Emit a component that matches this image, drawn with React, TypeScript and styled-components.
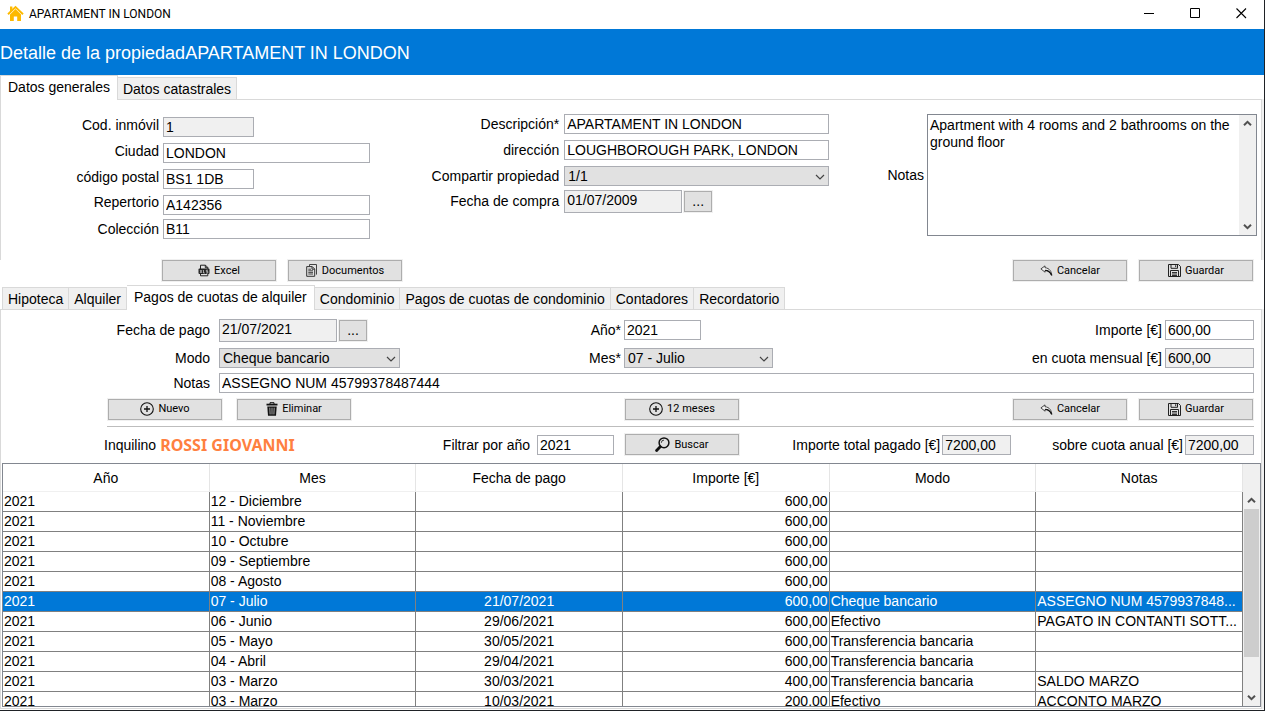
import React, { useState } from "react";
import styled, { createGlobalStyle, css } from "styled-components";

const accent = "#0078d7";
const line = "#d9d9d9";
const fieldBorder = "#abadb3";
const readOnlyBg = "#f0f0f0";

const GlobalStyle = createGlobalStyle`
  *, *::before, *::after { box-sizing: border-box; }
  body {
    margin: 0;
    background: #fff;
    color: #000;
    font-family: "Liberation Sans", Arial, sans-serif;
    font-size: 14px;
    line-height: 16px;
  }
  button, input, select, textarea { font: inherit; color: inherit; margin: 0; border-radius: 0; outline: none; }
`;

/* ---------- window ---------- */

const Window = styled.div`
  display: flex;
  flex-direction: column;
  height: 100vh;
  min-width: 1100px;
  border-right: 1px solid #1f2226;
  border-bottom: 1px solid #1f2226;
  overflow: hidden;
`;

const TitleBar = styled.header`
  flex: none;
  display: flex;
  align-items: center;
  height: 29px;
  padding: 0 0 2px 7px;
  font-family: Roboto, "Segoe UI", sans-serif;
  font-size: 12px;
`;

const WindowTitle = styled.span`
  margin-left: 5px;
  flex: 1;
`;

const WindowButton = styled.button`
  display: flex;
  align-items: center;
  justify-content: center;
  width: 46px;
  height: 27px;
  padding: 0;
  border: 0;
  background: none;
`;

const Banner = styled.h1`
  flex: none;
  display: flex;
  align-items: center;
  height: 46px;
  margin: 0;
  padding-top: 2px;
  background: ${accent};
  color: #fff;
  font-size: 18px;
  font-weight: 400;
`;

/* ---------- tabs ---------- */

const TabStrip = styled.div<{ $indent?: boolean }>`
  flex: none;
  display: flex;
  align-items: flex-end;
  height: 24px;
  padding-left: ${(p) => (p.$indent ? 2 : 0)}px;
`;

const Tab = styled.button<{ $active?: boolean }>`
  height: ${(p) => (p.$active ? 24 : 22)}px;
  padding: ${(p) => (p.$active ? "0 7px 2px" : "0 5px")};
  border: 1px solid ${line};
  border-bottom: 0;
  background: ${(p) => (p.$active ? "#fff" : "#f0f0f0")};
  line-height: 20px;
  white-space: nowrap;
  & + & { border-left: ${(p) => (p.$active ? `1px solid ${line}` : "0")}; }
  ${(p) =>
    p.$active &&
    css`
      position: relative;
      margin-bottom: -1px;
      height: 25px;
    `}
`;

const Panel = styled.section<{ $fill?: boolean }>`
  border: 1px solid ${line};
  margin-right: 2px;
  box-shadow: 2px 0 0 #f0f0f0;
  ${(p) =>
    p.$fill
      ? css`
          flex: 1;
          min-height: 0;
          display: flex;
          flex-direction: column;
          margin-bottom: 1px;
        `
      : css`
          flex: none;
          border-bottom: 0;
        `}
`;

/* ---------- fields ---------- */

const Label = styled.label<{ $raised?: boolean }>`
  text-align: right;
  white-space: nowrap;
  padding-bottom: ${(p) => (p.$raised ? 5 : 0)}px;
`;

const Input = styled.input<{ $w?: number }>`
  width: ${(p) => (p.$w ? `${p.$w}px` : "100%")};
  height: 20px;
  padding: 0 2px;
  border: 1px solid ${fieldBorder};
  background: #fff;
  &:read-only { background: ${readOnlyBg}; }
`;

const DateInput = styled(Input)`
  height: 23px;
  padding-bottom: 2px;
`;

const SelectBox = styled.span<{ $w: number }>`
  position: relative;
  display: flex;
  width: ${(p) => p.$w}px;
  svg {
    position: absolute;
    right: 4px;
    top: 7px;
    pointer-events: none;
  }
`;

const SelectInput = styled.select`
  appearance: none;
  width: 100%;
  height: 20px;
  padding: 0 3px;
  border: 1px solid ${fieldBorder};
  background: #e1e1e1;
`;

const DateRow = styled.span`
  display: flex;
  align-items: center;
  gap: 2px;
`;

const buttonFace = css`
  border: 1px solid #adadad;
  background: #e1e1e1;
  box-shadow: 0 0 0 1px #f0f0f0;
  height: 21px;
  padding: 0;
`;

const DotsButton = styled.button`
  ${buttonFace}
  width: 28px;
  line-height: 16px;
`;

const ActionButton = styled.button<{ $gap?: number }>`
  ${buttonFace}
  display: flex;
  align-items: center;
  justify-content: center;
  gap: ${(p) => p.$gap ?? 4}px;
  width: 114px;
  font-family: Roboto, Tahoma, sans-serif;
  font-size: 11px;
  svg { flex: none; }
`;

/* ---------- general data ---------- */

const General = styled.div`
  display: flex;
  justify-content: space-between;
  align-items: flex-start;
  height: 160px;
  padding-right: 4px;
`;

const CodeGrid = styled.div`
  display: grid;
  grid-template-columns: 158px 207px;
  grid-template-rows: 26px 26px 26px 25px 24px;
  column-gap: 4px;
  align-items: center;
  margin-top: 14px;
`;

const DetailGrid = styled.div`
  display: grid;
  grid-template-columns: 131px 265px;
  grid-template-rows: 26px 26px 26px 24px;
  column-gap: 5px;
  align-items: center;
  margin-top: 11px;
`;

const NotesGroup = styled.div`
  display: flex;
  align-items: center;
  gap: 3px;
  margin-top: 14px;
`;

const NotesBox = styled.div`
  display: flex;
  width: 330px;
  height: 122px;
  border: 1px solid #828790;
`;

const NotesArea = styled.textarea`
  flex: 1;
  min-width: 0;
  padding: 2px;
  border: 0;
  resize: none;
  overflow: hidden;
  line-height: 17px;
`;

/* ---------- scroll bar ---------- */

const ScrollTrack = styled.div`
  flex: none;
  display: flex;
  flex-direction: column;
  align-items: center;
  justify-content: space-between;
  width: 17px;
  background: #f0f0f0;
`;

const ScrollButton = styled.button`
  display: flex;
  align-items: center;
  justify-content: center;
  width: 17px;
  height: 17px;
  padding: 0;
  border: 0;
  background: none;
`;

const ScrollLane = styled.div`
  flex: 1;
  width: 15px;
`;

const ScrollThumb = styled.div`
  height: 82%;
  background: #cdcdcd;
`;

/* ---------- bars ---------- */

const ActionBar = styled.div`
  flex: none;
  display: flex;
  align-items: flex-start;
  gap: 12px;
  height: 25px;
  padding: 0 11px 0 162px;
`;

const Spacer = styled.span<{ $grow?: number }>`
  flex: ${(p) => p.$grow ?? 1};
`;

const Split = styled.div<{ $h: number }>`
  flex: none;
  display: grid;
  grid-template-columns: 623fr 630fr;
  align-items: center;
  height: ${(p) => p.$h}px;
  padding-right: 7px;
`;

const Half = styled.div<{ $indent?: number; $gap?: number; $end?: number }>`
  display: flex;
  align-items: center;
  gap: ${(p) => p.$gap ?? 3}px;
  padding-left: ${(p) => p.$indent ?? 0}px;
  padding-right: ${(p) => p.$end ?? 0}px;
`;

const PaymentField = styled.div`
  flex: 1;
  display: grid;
  grid-template-columns: 209px minmax(0, 1fr);
  column-gap: 9px;
  align-items: center;
`;

const PaymentForm = styled.div`
  flex: none;
  padding-top: 6px;
`;

const NotesRow = styled.div`
  display: flex;
  align-items: center;
  height: 22px;
  padding-right: 7px;
`;

const Rule = styled.hr`
  flex: none;
  width: calc(100% - 113px);
  height: 1px;
  margin: 2px 7px 0 106px;
  border: 0;
  background: #bdbdbd;
`;

const Tenant = styled.strong`
  color: #ff8040;
  font-family: "Noto Sans", Tahoma, sans-serif;
  font-size: 16px;
  line-height: 20px;
`;

/* ---------- payments table ---------- */

const TableFrame = styled.div`
  flex: 1;
  min-height: 0;
  display: flex;
  margin: 1px 0 1px 1px;
  border: 1px solid #828790;
`;

const TableView = styled.div`
  flex: 1;
  min-width: 0;
  overflow: hidden;
`;

const Table = styled.table`
  width: 100%;
  table-layout: fixed;
  border-collapse: separate;
  border-spacing: 0;
`;

const HeadCell = styled.th`
  height: 28px;
  padding: 0;
  border-right: 1px solid #e5e5e5;
  border-bottom: 1px solid #f0f0f0;
  font-weight: 400;
`;

const Row = styled.tr<{ $selected: boolean }>`
  background: ${(p) => (p.$selected ? accent : "#fff")};
  color: ${(p) => (p.$selected ? "#fff" : "#000")};
`;

const Cell = styled.td<{ $align?: "left" | "center" | "right" }>`
  height: 20px;
  padding: 0 1px 2px;
  border-right: 1px solid #808080;
  border-bottom: 1px solid #808080;
  text-align: ${(p) => p.$align ?? "left"};
  white-space: nowrap;
  overflow: hidden;
`;

const TableScroll = styled(ScrollTrack)`
  padding-top: 28px;
`;

/* ---------- icons ---------- */

const HouseIcon = () => (
  <svg width="17" height="17" viewBox="0 0 17 17" aria-hidden="true">
    <path d="M3 1.5h2.4v3L3 7z" fill="#fdb900" />
    <path d="M1 9.3 8.5 2 16 9.3" fill="none" stroke="#fdb900" strokeWidth="1.9" />
    <path d="M3 9.4 8.5 4.1 14 9.4V16h-3.8v-4.5H6.8V16H3z" fill="#fdb900" />
  </svg>
);

const ExcelIcon = () => (
  <svg width="12" height="13" viewBox="0 0 12 13" aria-hidden="true">
    <path d="M2.5 5V1.2h5L9.8 3.5V5M7.3 1.2v2.5h2.5M2.5 9.5v2.3h7.3V9.5" fill="none" stroke="#222" />
    <rect x="0.5" y="4.5" width="11" height="5.6" rx="1" fill="#222" />
    <path d="m2 6 2 3M4 6 2 9M5.5 6v3h1.3M10 6.2H8.3v1.2h1.5V9H8" fill="none" stroke="#ddd" strokeWidth="0.7" />
  </svg>
);

const DocumentsIcon = () => (
  <svg width="12" height="13" viewBox="0 0 12 13" aria-hidden="true">
    <path d="M2.5 2.5v-2h7v9.8H9" fill="none" stroke="#444" transform="translate(1 0)" />
    <path d="M.7 2.6h5.6l2.4 2.4v7.3h-8zM6 2.8v2.4h2.5" fill="none" stroke="#333" />
    <path d="M2.3 5.2H5M2.3 6.8H7M2.3 8.4H7M2.3 10H7" stroke="#333" strokeWidth="0.9" />
  </svg>
);

const UndoIcon = () => (
  <svg width="13" height="11" viewBox="0 0 13 11" aria-hidden="true">
    <path
      d="M5 .9.9 3.9l4.2 3.3V5.4c3.1 0 5 1.6 6.6 5-.1-3.7-2-7.2-6.7-7.7z"
      fill="#f4f4f4"
      stroke="#333"
      strokeWidth="0.9"
      strokeLinejoin="round"
    />
    <path d="M5.2 5.3c3.1 0 5 1.7 6.5 5" fill="none" stroke="#111" strokeWidth="1.3" />
  </svg>
);

const SaveIcon = () => (
  <svg width="13" height="13" viewBox="0 0 13 13" aria-hidden="true">
    <path d="M.5.5h10l2 2v10H.5z" fill="none" stroke="#222" />
    <path d="M3 .5v3.8h6.5V.5M7.7 1.2v2" fill="none" stroke="#222" />
    <path d="M2.5 12.5V6.5h8v6" fill="none" stroke="#222" />
    <path d="M4 8.5h5M4 10h5M4 11.5h5" stroke="#333" />
  </svg>
);

const PlusIcon = () => (
  <svg width="14" height="14" viewBox="0 0 14 14" aria-hidden="true">
    <circle cx="7" cy="7" r="6.3" fill="none" stroke="#111" strokeWidth="1.1" />
    <path d="M7 4v6M4 7h6" stroke="#111" strokeWidth="1.3" />
  </svg>
);

const TrashIcon = () => (
  <svg width="12" height="14" viewBox="0 0 12 14" aria-hidden="true">
    <path d="M4 2V.7h4V2" fill="none" stroke="#111" />
    <path d="M.5 2.6h11" stroke="#111" strokeWidth="1.8" />
    <path d="M1.3 4.4h9.4L10 13.7H2z" fill="#111" />
    <path d="M3.8 5.7l.3 6.7M6 5.7v6.7M8.2 5.7l-.3 6.7" stroke="#ccc" strokeWidth="0.8" />
  </svg>
);

const SearchIcon = () => (
  <svg width="15" height="15" viewBox="0 0 15 15" aria-hidden="true">
    <circle cx="9" cy="5.8" r="4.9" fill="none" stroke="#111" strokeWidth="1.5" />
    <path d="M6.3 5.8A2.7 2.7 0 0 1 9 3.1" fill="none" stroke="#111" strokeWidth="0.8" />
    <path d="m5.2 9.7-3.6 3.7" stroke="#111" strokeWidth="2.8" strokeLinecap="round" />
  </svg>
);

const ComboArrow = () => (
  <svg width="10" height="8" viewBox="0 0 10 8" aria-hidden="true">
    <path d="m1 2 4 4 4-4" fill="none" stroke="#444" strokeWidth="1.2" />
  </svg>
);

const ScrollArrow = ({ up }: { up?: boolean }) => (
  <svg width="9" height="7" viewBox="0 0 9 7" aria-hidden="true">
    <path d={up ? "m1 5.2 3.5-3.4L8 5.2" : "m1 1.8 3.5 3.4L8 1.8"} fill="none" stroke="#505050" strokeWidth="2" />
  </svg>
);

const MinimizeIcon = () => (
  <svg width="11" height="11" viewBox="0 0 11 11" aria-hidden="true">
    <path d="M0 5.5h10" stroke="#000" />
  </svg>
);
const MaximizeIcon = () => (
  <svg width="11" height="11" viewBox="0 0 11 11" aria-hidden="true">
    <path d="M.5.5h9v9h-9z" fill="none" stroke="#000" />
  </svg>
);
const CloseIcon = () => (
  <svg width="11" height="11" viewBox="0 0 11 11" aria-hidden="true">
    <path d="m.5.5 9.5 9.5M10 .5.5 10" stroke="#000" strokeWidth="1.1" />
  </svg>
);

/* ---------- pieces ---------- */

const Combo = ({ id, width, options }: { id: string; width: number; options: string[] }) => (
  <SelectBox $w={width}>
    <SelectInput id={id}>
      {options.map((o) => (
        <option key={o}>{o}</option>
      ))}
    </SelectInput>
    <ComboArrow />
  </SelectBox>
);

const DateField = ({ id, value }: { id: string; value: string }) => (
  <DateRow>
    <DateInput id={id} $w={118} readOnly defaultValue={value} />
    <DotsButton type="button" aria-label="Elegir fecha">...</DotsButton>
  </DateRow>
);

const CancelSave = () => (
  <>
    <ActionButton type="button"><UndoIcon />Cancelar</ActionButton>
    <ActionButton type="button"><SaveIcon />Guardar</ActionButton>
  </>
);

const mainTabs = ["Datos generales", "Datos catastrales"];
const subTabs = [
  "Hipoteca",
  "Alquiler",
  "Pagos de cuotas de alquiler",
  "Condominio",
  "Pagos de cuotas de condominio",
  "Contadores",
  "Recordatorio",
];

const columns = ["Año", "Mes", "Fecha de pago", "Importe [€]", "Modo", "Notas"];
const payments = [
  ["12 - Diciembre", "", "600,00", "", ""],
  ["11 - Noviembre", "", "600,00", "", ""],
  ["10 - Octubre", "", "600,00", "", ""],
  ["09 - Septiembre", "", "600,00", "", ""],
  ["08 - Agosto", "", "600,00", "", ""],
  ["07 - Julio", "21/07/2021", "600,00", "Cheque bancario", "ASSEGNO NUM 4579937848..."],
  ["06 - Junio", "29/06/2021", "600,00", "Efectivo", "PAGATO IN CONTANTI SOTT..."],
  ["05 - Mayo", "30/05/2021", "600,00", "Transferencia bancaria", ""],
  ["04 - Abril", "29/04/2021", "600,00", "Transferencia bancaria", ""],
  ["03 - Marzo", "30/03/2021", "400,00", "Transferencia bancaria", "SALDO MARZO"],
  ["03 - Marzo", "10/03/2021", "200,00", "Efectivo", "ACCONTO MARZO"],
];

export default function App() {
  const [selected, setSelected] = useState(5);

  return (
    <Window>
      <GlobalStyle />
      <TitleBar>
        <HouseIcon />
        <WindowTitle>APARTAMENT IN LONDON</WindowTitle>
        <WindowButton type="button" aria-label="Minimizar"><MinimizeIcon /></WindowButton>
        <WindowButton type="button" aria-label="Maximizar"><MaximizeIcon /></WindowButton>
        <WindowButton type="button" aria-label="Cerrar"><CloseIcon /></WindowButton>
      </TitleBar>
      <Banner>Detalle de la propiedadAPARTAMENT IN LONDON</Banner>

      <TabStrip role="tablist">
        {mainTabs.map((t, i) => (
          <Tab key={t} type="button" role="tab" aria-selected={i === 0} $active={i === 0}>{t}</Tab>
        ))}
      </TabStrip>
      <Panel>
        <General>
          <CodeGrid>
            <Label htmlFor="code" $raised>Cod. inmóvil</Label>
            <Input id="code" $w={91} readOnly defaultValue="1" />
            <Label htmlFor="city" $raised>Ciudad</Label>
            <Input id="city" defaultValue="LONDON" />
            <Label htmlFor="zip" $raised>código postal</Label>
            <Input id="zip" $w={91} defaultValue="BS1 1DB" />
            <Label htmlFor="repertory" $raised>Repertorio</Label>
            <Input id="repertory" defaultValue="A142356" />
            <Label htmlFor="collection">Colección</Label>
            <Input id="collection" defaultValue="B11" />
          </CodeGrid>
          <DetailGrid>
            <Label htmlFor="description">Descripción*</Label>
            <Input id="description" defaultValue="APARTAMENT IN LONDON" />
            <Label htmlFor="address">dirección</Label>
            <Input id="address" defaultValue="LOUGHBOROUGH PARK, LONDON" />
            <Label htmlFor="share">Compartir propiedad</Label>
            <Combo id="share" width={265} options={["1/1"]} />
            <Label htmlFor="bought">Fecha de compra</Label>
            <DateField id="bought" value="01/07/2009" />
          </DetailGrid>
          <NotesGroup>
            <Label htmlFor="notes">Notas</Label>
            <NotesBox>
              <NotesArea id="notes" defaultValue="Apartment with 4 rooms and 2 bathrooms on the ground floor" />
              <ScrollTrack>
                <ScrollButton type="button" aria-label="Subir"><ScrollArrow up /></ScrollButton>
                <ScrollButton type="button" aria-label="Bajar"><ScrollArrow /></ScrollButton>
              </ScrollTrack>
            </NotesBox>
          </NotesGroup>
        </General>
      </Panel>

      <ActionBar>
        <ActionButton type="button"><ExcelIcon />Excel</ActionButton>
        <ActionButton type="button"><DocumentsIcon />Documentos</ActionButton>
        <Spacer />
        <CancelSave />
      </ActionBar>

      <TabStrip role="tablist" $indent>
        {subTabs.map((t, i) => (
          <Tab key={t} type="button" role="tab" aria-selected={i === 2} $active={i === 2}>{t}</Tab>
        ))}
      </TabStrip>
      <Panel $fill>
        <PaymentForm>
          <Split $h={28}>
            <Half $end={3}>
              <PaymentField>
                <Label htmlFor="paid">Fecha de pago</Label>
                <DateField id="paid" value="21/07/2021" />
              </PaymentField>
              <Label htmlFor="year">Año*</Label>
            </Half>
            <Half>
              <Input id="year" $w={77} defaultValue="2021" />
              <Spacer />
              <Label htmlFor="amount">Importe [€]</Label>
              <Input id="amount" $w={89} defaultValue="600,00" />
            </Half>
          </Split>
          <Split $h={28}>
            <Half $end={3}>
              <PaymentField>
                <Label htmlFor="mode">Modo</Label>
                <Combo id="mode" width={181} options={["Cheque bancario", "Efectivo", "Transferencia bancaria"]} />
              </PaymentField>
              <Label htmlFor="month">Mes*</Label>
            </Half>
            <Half>
              <Combo id="month" width={149} options={["07 - Julio"]} />
              <Spacer />
              <Label htmlFor="monthly">en cuota mensual [€]</Label>
              <Input id="monthly" $w={89} readOnly defaultValue="600,00" />
            </Half>
          </Split>
          <NotesRow>
            <PaymentField>
              <Label htmlFor="paymentNotes">Notas</Label>
              <Input id="paymentNotes" defaultValue="ASSEGNO NUM 45799378487444" />
            </PaymentField>
          </NotesRow>
        </PaymentForm>
        <Split $h={30}>
          <Half $indent={107} $gap={15}>
            <ActionButton type="button"><PlusIcon />Nuevo</ActionButton>
            <ActionButton type="button"><TrashIcon />Eliminar</ActionButton>
          </Half>
          <Half $gap={12} $indent={1} $end={1}>
            <ActionButton type="button"><PlusIcon />12 meses</ActionButton>
            <Spacer />
            <CancelSave />
          </Half>
        </Split>
        <Rule />
        <Split $h={35}>
          <Half $indent={103} $gap={4} $end={10}>
            <span>Inquilino</span>
            <Tenant>ROSSI GIOVANNI</Tenant>
            <Spacer />
            <Half $gap={7}>
              <Label htmlFor="filter">Filtrar por año</Label>
              <Input id="filter" $w={77} defaultValue="2021" />
            </Half>
          </Half>
          <Half $indent={1} $gap={2}>
            <ActionButton type="button"><SearchIcon />Buscar</ActionButton>
            <Spacer $grow={4} />
            <Label htmlFor="total">Importe total pagado [€]</Label>
            <Input id="total" $w={69} readOnly defaultValue="7200,00" />
            <Spacer $grow={3} />
            <Label htmlFor="annual">sobre cuota anual [€]</Label>
            <Input id="annual" $w={69} readOnly defaultValue="7200,00" />
          </Half>
        </Split>
        <TableFrame>
          <TableView>
            <Table>
              <thead>
                <tr>
                  {columns.map((c) => (
                    <HeadCell key={c} scope="col">{c}</HeadCell>
                  ))}
                </tr>
              </thead>
              <tbody>
                {payments.map(([month, date, amount, mode, notes], i) => (
                  <Row key={i} $selected={i === selected} onClick={() => setSelected(i)}>
                    <Cell>2021</Cell>
                    <Cell>{month}</Cell>
                    <Cell $align="center">{date}</Cell>
                    <Cell $align="right">{amount}</Cell>
                    <Cell>{mode}</Cell>
                    <Cell>{notes}</Cell>
                  </Row>
                ))}
              </tbody>
            </Table>
          </TableView>
          <TableScroll>
            <ScrollButton type="button" aria-label="Subir"><ScrollArrow up /></ScrollButton>
            <ScrollLane><ScrollThumb /></ScrollLane>
            <ScrollButton type="button" aria-label="Bajar"><ScrollArrow /></ScrollButton>
          </TableScroll>
        </TableFrame>
      </Panel>
    </Window>
  );
}
